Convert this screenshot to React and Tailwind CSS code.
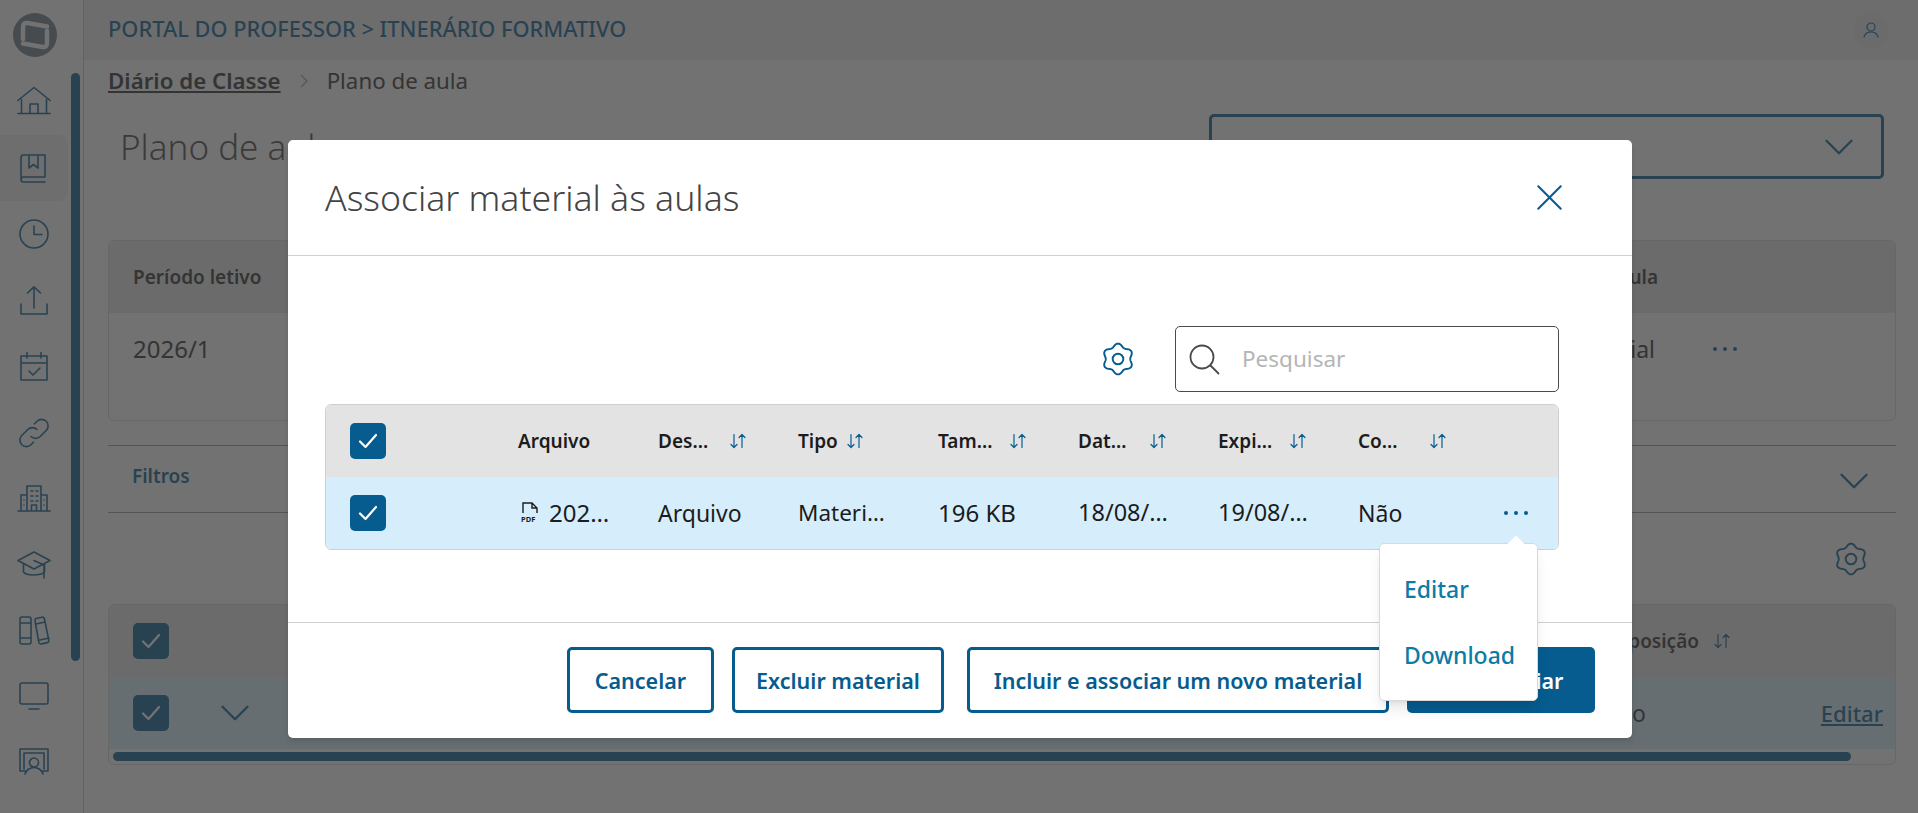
import React from 'react';
import { X, ChevronDown } from 'lucide-react';

const Line = ({ className, children, vb = '0 0 32 32', sw = 1.6 }) => (
  <svg viewBox={vb} fill="none" stroke="currentColor" strokeWidth={sw} strokeLinecap="round" strokeLinejoin="round" className={className}>
    {children}
  </svg>
);

const sideIcons = [
  <path key="home" d="M1 27.500h32M4.500 27V13.500M29.500 27V13.500M0.800 14.500 17 1.500l16.200 13M13 27v-9h8v9" />,
  <path key="book" d="M4 25V5.500A2.500 2.500 0 0 1 6.500 3H28v22H6.500A2.500 2.500 0 0 0 6.500 30H28M12 3v13l4.500-3.500L21 16V3" />,
  <g key="clock"><circle cx="17" cy="16" r="14" /><path d="M17 8v8.500h8" /></g>,
  <path key="upload" d="M4 20v10h26V20M17 24V3M10.500 9 17 2.800 23.500 9" />,
  <path key="cal" d="M4 6h26v24H4zM4 13h26M10 2.500V8M24 2.500V8M12 21l4 4 7-7" />,
  <path key="link" d="M14 20.500a6.500 6.500 0 0 0 9.200 0l6-6a6.500 6.500 0 0 0-9.200-9.200l-2.500 2.500M20 13.500a6.500 6.500 0 0 0-9.200 0l-6 6a6.500 6.500 0 0 0 9.200 9.200l2.500-2.500" />,
  <path key="build" d="M1 29h32M4 29V13h6M30 29V13h-6M10 29V4h14v25M14.500 29v-6h5v6M14 9h2M19 9h2M14 14h2M19 14h2M14 19h2M19 19h2M7 18h0M7 23h0M27 18h0M27 23h0" />,
  <path key="grad" d="M17 4 1 12.500l16 8.500 16-8.500zM6.500 16v8c3 4 17 4 21 0v-8M17 12.500l10 4.500v13" />,
  <path key="books" d="M3 5a2 2 0 0 1 2-2h7a2 2 0 0 1 2 2v23a2 2 0 0 1-2 2H5a2 2 0 0 1-2-2zM3 9h11M3 24h11M19 4.500l6-1.300a2 2 0 0 1 2.400 1.500l4.400 21.500a2 2 0 0 1-1.500 2.400l-6 1.300a2 2 0 0 1-2.400-1.500L18 6.900a2 2 0 0 1 1-2.400zM19 10l9-2M23 26l9-2" />,
  <path key="mon" d="M5 3h24a2 2 0 0 1 2 2v17a2 2 0 0 1-2 2H5a2 2 0 0 1-2-2V5a2 2 0 0 1 2-2zM12 29h10" />,
  <path key="board" d="M8 25H3V3h28v22h-5M7 7h20v16M7 23V7M17 12a4.500 4.500 0 1 0 0 9 4.500 4.500 0 0 0 0-9zM8 28c1-4 5-6.500 9-6.500s8 2.500 9 6.500" />,
];

const Sort = ({ className }) => (
  <svg viewBox="0 0 18 18" fill="none" stroke="currentColor" strokeWidth="1.200" strokeLinecap="round" strokeLinejoin="round" className={className}>
    <path d="M5 2.500v13M2 12.500l3 3 3-3M13 15.500v-13M10 5.500l3-3 3 3" />
  </svg>
);

const Check = ({ className = '' }) => (
  <div className={`w-9 h-9 rounded-[5px] flex items-center justify-center shrink-0 bg-[#065c8f] ${className}`}>
    <svg viewBox="0 0 24 24" fill="none" stroke="#fff" strokeWidth="2.200" strokeLinecap="round" strokeLinejoin="round" className="w-6 h-6">
      <path d="M4 12.500l5.500 5.500L20 6" />
    </svg>
  </div>
);

// six soft lobes, top and bottom ones upright
const gearPath = Array.from({ length: 121 }, (_, i) => {
  const t = (i / 120) * Math.PI * 2;
  const r = 13 + 1.5 * Math.cos(6 * t);
  const x = 16 + r * Math.sin(t);
  const y = 16 - r * Math.cos(t);
  return `${i === 0 ? 'M' : 'L'}${x.toFixed(2)} ${y.toFixed(2)}`;
}).join('') + 'Z';

const Gear = ({ className }) => (
  <svg viewBox="0 0 32 32" fill="none" stroke="currentColor" strokeWidth="1.800" strokeLinejoin="round" className={className}>
    <circle cx="16" cy="16" r="5" />
    <path d={gearPath} />
  </svg>
);

const Dots = ({ className = 'w-[4px] h-[4px]', gap = 'gap-[6px]' }) => (
  <span className={`flex ${gap}`}>
    <i className={`rounded-full bg-[#065c8f] ${className}`} />
    <i className={`rounded-full bg-[#065c8f] ${className}`} />
    <i className={`rounded-full bg-[#065c8f] ${className}`} />
  </span>
);

const columns = [
  { label: 'Des…', w: 'w-[58px]', ml: 'ml-[13px]', value: 'Arquivo', size: 'text-[23px]' },
  { label: 'Tipo', w: '', ml: 'ml-2', value: 'Materi…', size: 'text-[22.500px]' },
  { label: 'Tam…', w: 'w-[58px]', ml: 'ml-[13px]', value: '196 KB', size: 'text-[24px]' },
  { label: 'Dat…', w: 'w-[58px]', ml: 'ml-[13px]', value: '18/08/…', size: 'text-[23.500px]' },
  { label: 'Expi…', w: 'w-[58px]', ml: 'ml-[13px]', value: '19/08/…', size: 'text-[23.500px]' },
  { label: 'Co…', w: 'w-[58px]', ml: 'ml-[13px]', value: 'Não', size: 'text-[23px]' },
];

export default function App() {
  return (
    <div className="relative h-[813px] overflow-hidden flex bg-[#fbfbfb] text-[#2c2c2c] font-['Noto_Sans',sans-serif]">
      {/* Sidebar */}
      <aside className="w-[84px] shrink-0 border-r border-[#c4c4c4] rounded-tl-lg flex flex-col">
        <div className="h-[69px] shrink-0 flex items-center pl-[13px]">
          <svg viewBox="0 0 44 44" className="w-11 h-11">
            <circle cx="22" cy="22" r="22" fill="#667a85" />
            <path d="M10 26V14Q10 9.500 14.500 10L34 13.500" fill="none" stroke="#fbfbfb" strokeWidth="4.500" strokeLinecap="round" strokeLinejoin="round" />
            <path d="M34 18V30Q34 34.500 29.500 34L10 30.500" fill="none" stroke="#fbfbfb" strokeWidth="4.500" strokeLinecap="round" strokeLinejoin="round" />
          </svg>
        </div>
        <div className="flex-1 flex">
          <div className="w-[68px] mr-[3px] flex flex-col">
            {sideIcons.map((icon, i) => (
              <div key={i} className={`h-[66px] flex items-center justify-center text-[#065c8f] ${i === 1 ? 'bg-[#eeeeee] rounded-r-lg' : ''}`}>
                <Line vb="0 0 34 32" className="w-[34px] h-[32px]">{icon}</Line>
              </div>
            ))}
          </div>
          <div className="w-[9px] h-[588px] mt-1 rounded-full bg-[#065c8f]" />
        </div>
      </aside>

      {/* Page */}
      <main className="flex-1 min-w-0 flex flex-col">
        <header className="h-[60px] shrink-0 bg-[#ececec] flex items-center justify-between pl-6 pr-[29px]">
          <span className="text-[21.800px] font-medium text-[#065c8f] pb-[2px]">PORTAL DO PROFESSOR &gt; ITNERÁRIO FORMATIVO</span>
          <div className="w-9 h-9 rounded-full bg-[#e3e3e3] flex items-center justify-center text-[#065c8f]">
            <Line vb="0 0 18 18" sw={1.200} className="w-[18px] h-[18px]">
              <circle cx="9" cy="6" r="4" />
              <path d="M2 16c.8-3 3.500-5 7-5s6.200 2 7 5" />
            </Line>
          </div>
        </header>
        <div className="pl-6 pr-[22px] flex flex-col flex-1">
          <nav className="flex items-center h-11 pb-[2px] text-[22.300px]">
            <span className="font-semibold underline underline-offset-2">Diário de Classe</span>
            <svg viewBox="0 0 10 14" fill="none" stroke="#9a9a9a" strokeWidth="1.200" className="w-[10px] h-[14px] mx-[18px]">
              <path d="M2 1l6 6-6 6" />
            </svg>
            <span>Plano de aula</span>
          </nav>
          <div className="flex items-start justify-between h-[136px] pt-[10px]">
            <h1 className="pl-3 pt-[7px] text-[35px] font-light text-[#444]">Plano de aula</h1>
            <div className="w-[675px] h-[65px] border-[3px] border-[#065c8f] rounded-[5px] flex items-center justify-end pr-[17px] text-[#065c8f] mr-[12px]">
              <ChevronDown className="w-[50px] h-[50px]" strokeWidth={1.100} />
            </div>
          </div>

          <section className="border border-[#d6d6d6] rounded-md h-[181px]">
            <div className="h-[72px] bg-[#e3e3e3] rounded-t-md flex items-center justify-between pl-6 pr-[237px] text-[19px] font-semibold">
              <span>Período letivo</span>
              <span>Aula</span>
            </div>
            <div className="h-[72px] flex items-center justify-between pl-6 pr-[158px]">
              <span className="text-[24px]">2026/1</span>
              <div className="flex items-center gap-[58px] text-[23px]">
                <span>Presencial</span>
                <Dots />
              </div>
            </div>
          </section>

          <div className="mt-6 h-[68px] border-y border-[#9a9a9a] flex items-center justify-between pl-6 pr-[17px] text-[#065c8f]">
            <span className="text-[19px] font-semibold pb-[6px]">Filtros</span>
            <ChevronDown className="w-[50px] h-[50px] mt-1" strokeWidth={1.100} />
          </div>

          <div className="h-[91px] flex items-center justify-end pr-[28px] text-[#065c8f]">
            <Gear className="w-[34px] h-[34px]" />
          </div>

          <section className="border border-[#d6d6d6] rounded-md h-[161px]">
            <div className="h-[72px] bg-[#e3e3e3] rounded-t-md flex items-center pl-6 pr-[164px] justify-between">
              <Check />
              <div className="flex items-center gap-[14px] text-[19px] font-semibold">
                <span>Exposição</span>
                <Sort className="w-[18px] h-[18px] text-[#065c8f]" />
              </div>
            </div>
            <div className="h-[72px] bg-[#d6eefc] flex items-center pl-6 pr-[12px] text-[23px]">
              <Check />
              <ChevronDown className="w-[50px] h-[50px] ml-[41px] text-[#065c8f]" strokeWidth={1.100} />
              <span className="ml-auto mr-[175px]">Não</span>
              <span className="text-[22px] text-[#065c8f] underline font-medium">Editar</span>
            </div>
            <div className="h-[9px] mt-[3px] mx-[4px] w-[1738px] rounded-full bg-[#065c8f]" />
          </section>
        </div>
      </main>

      {/* Modal overlay */}
      <div className="absolute inset-0 bg-[#383838]/70 flex justify-center items-start pt-[140px] pl-[2px]">
        <div className="relative w-[1344px] h-[598px] bg-white rounded-[5px] flex flex-col shadow-md">
          <div className="h-[116px] shrink-0 border-b border-[#cfcfcf] flex items-center justify-between pl-[37px] pr-[60px]">
            <h2 className="text-[35.600px] font-light text-[#444]">Associar material às aulas</h2>
            <X className="w-[45px] h-[45px] text-[#065c8f]" strokeWidth={1.100} />
          </div>

          <div className="flex-1 pt-[70px] pl-[37px] pr-[73px]">
            <div className="flex items-center justify-end gap-[40px] h-[66px]">
              <Gear className="w-[34px] h-[34px] text-[#065c8f]" />
              <div className="w-[384px] h-[66px] border border-[#4a4a4a] rounded-[5px] flex items-center pl-[12px] gap-[22px] text-[22.500px] text-[#b5b5b5]">
                <svg viewBox="0 0 32 32" fill="none" stroke="#4a4a4a" strokeWidth="1.800" strokeLinecap="round" className="w-[32px] h-[32px] shrink-0">
                  <circle cx="14" cy="14" r="11.500" />
                  <path d="M22.500 22.500l8 8" />
                </svg>
                <span>Pesquisar</span>
              </div>
            </div>

            <div className="mt-3 border border-[#cfcfcf] rounded-md overflow-hidden">
              <div className="h-[72px] bg-[#e3e3e3] grid grid-cols-[192px_repeat(7,140px)_1fr] items-center text-[19px] font-semibold text-[#1c1c1c]">
                <div className="pl-6"><Check /></div>
                <div>Arquivo</div>
                {columns.map((c) => (
                  <div key={c.label} className="flex items-center">
                    <span className={c.w}>{c.label}</span>
                    <Sort className={`w-[18px] h-[18px] text-[#065c8f] shrink-0 ${c.ml}`} />
                  </div>
                ))}
                <div />
              </div>
              <div className="h-[72px] bg-[#d6eefc] grid grid-cols-[192px_repeat(7,140px)_1fr] items-center text-[#1c1c1c]">
                <div className="pl-6"><Check /></div>
                <div className="flex items-center gap-[9px] pl-[2px]">
                  <svg viewBox="0 0 20 24" fill="none" stroke="#1c1c1c" strokeWidth="1.400" className="w-[20px] h-[24px] shrink-0">
                    <path d="M3 12V2h9l5 5v5M12 2v5h5" />
                    <text x="1" y="21" fontSize="7.500" fontWeight="700" fill="#1c1c1c" stroke="none">PDF</text>
                  </svg>
                  <span className="text-[24px]">202…</span>
                </div>
                {columns.map((c) => (
                  <div key={c.label} className={c.size}>{c.value}</div>
                ))}
                <div className="pl-[6px]"><Dots /></div>
              </div>
            </div>
          </div>

          <div className="h-[116px] shrink-0 border-t border-[#cfcfcf] flex items-start justify-end gap-[18px] pt-[24px] pr-[37px] text-[21.500px] font-semibold">
            <button className="w-[147px] h-[66px] pt-[2px] border-[3px] border-[#065c8f] rounded-[5px] text-[#065c8f]">Cancelar</button>
            <button className="w-[212px] h-[66px] pt-[2px] border-[3px] border-[#065c8f] rounded-[5px] text-[#065c8f]">Excluir material</button>
            <button className="w-[422px] h-[66px] pt-[2px] border-[3px] border-[#065c8f] rounded-[5px] text-[#065c8f] ml-[5px]">Incluir e associar um novo material</button>
            <button className="w-[188px] h-[66px] pt-[2px] rounded-[5px] bg-[#065c8f] text-white">Desassociar</button>
          </div>

          {/* Row actions popup */}
          <div className="absolute left-[1091px] top-[403px] w-[159px] h-[158px] bg-white rounded-[5px] border border-[#d9d9d9] shadow-lg flex flex-col justify-center gap-[36px] pl-6 text-[23px] leading-[30px] font-medium text-[#0c7ba6]">
            <div className="absolute -top-[6px] left-[130px] w-[12px] h-[12px] rotate-45 bg-white" />
            <span>Editar</span>
            <span>Download</span>
          </div>
        </div>
      </div>
    </div>
  );
}
